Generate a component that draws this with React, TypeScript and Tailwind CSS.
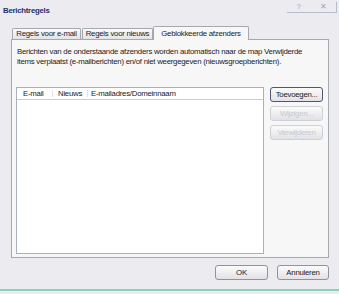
const tabBase =
  "flex items-center justify-center border border-b-0 border-[#a3a9ad] rounded-t-[2px] leading-none whitespace-nowrap";

function Btn({ label, w, tone }: { label: string; w: string; tone: "default" | "normal" | "off" }) {
  const look =
    tone === "default"
      ? "border-[#4d5675] text-[#1a1a1a]"
      : tone === "normal"
      ? "border-[#8e93a3] text-[#1a1a1a]"
      : "border-[#cdd0d6] text-[#c5c7cc]";
  return (
    <div
      className={`${w} h-[15px] flex items-center justify-center rounded-[3px] border bg-gradient-to-b from-[#fbfbfb] to-[#e2e2e6] leading-none whitespace-nowrap ${look}`}
    >
      {label}
    </div>
  );
}

export default function App() {
  return (
    <div className="w-[339px] h-[294px] overflow-hidden flex flex-col bg-[#ececf0] text-[7.8px] tracking-[-0.25px] text-[#1a1a1a] font-['Liberation_Sans',Arial,sans-serif]">
      {/* title */}
      <div className="h-[20px] flex items-start justify-between">
        <span className="pl-[3px] pt-[6px] leading-[10px] font-bold text-[#1d2f6c]">Berichtregels</span>
        <div className="mt-[2px] mr-[2px] w-[50px] h-[11px] flex items-center justify-around border-b border-r border-[#b6bdcd] text-[#9ba4be] leading-none">
          <span>?</span>
          <span>✕</span>
        </div>
      </div>

      {/* tabs */}
      <div className="mt-[6px] pl-[12px] flex items-end h-[13px]">
        <div className={`${tabBase} w-[69px] h-[11px] bg-gradient-to-b from-[#fbfbfb] to-[#e3e3e6]`}>
          Regels voor e-mail
        </div>
        <div className={`${tabBase} ml-px w-[71px] h-[11px] bg-gradient-to-b from-[#fbfbfb] to-[#e3e3e6]`}>
          Regels voor nieuws
        </div>
        <div className={`${tabBase} relative z-10 -mb-px w-[96px] h-[14px] bg-[#f7f7f8]`}>
          Geblokkeerde afzenders
        </div>
      </div>

      {/* panel */}
      <div className="ml-[11px] w-[318px] h-[219px] border border-[#a3a9ad] bg-[#f7f7f8] flex flex-col">
        <p className="pt-[7px] pl-[5px] leading-[9.5px] whitespace-nowrap">
          Berichten van de onderstaande afzenders worden automatisch naar de map Verwijderde
          <br />
          items verplaatst (e-mailberichten) en/of niet weergegeven (nieuwsgroepberichten).
        </p>
        <div className="mt-[21px] ml-[4px] flex items-start">
          <div className="w-[248px] h-[167px] border border-[#a9b0b8] bg-white">
            <div className="h-[12px] flex items-center border-b border-[#c4cce0] leading-none whitespace-nowrap">
              <span className="w-[36px] pl-[6px] border-r border-[#e2e2e2]">E-mail</span>
              <span className="w-[35px] pl-[5px] border-r border-[#e2e2e2]">Nieuws</span>
              <span className="pl-[3px]">E-mailadres/Domeinnaam</span>
            </div>
          </div>
          <div className="ml-[6px] flex flex-col gap-[4px]">
            <Btn label="Toevoegen..." w="w-[53px]" tone="default" />
            <Btn label="Wijzigen..." w="w-[53px]" tone="off" />
            <Btn label="Verwijderen" w="w-[53px]" tone="off" />
          </div>
        </div>
      </div>

      {/* footer buttons */}
      <div className="mt-[7px] pr-[10px] flex justify-end gap-[9px]">
        <Btn label="OK" w="w-[53px]" tone="normal" />
        <Btn label="Annuleren" w="w-[52px]" tone="normal" />
      </div>

      <div className="mt-[9px] h-[2px] bg-[#86d2bc]" />
    </div>
  );
}
